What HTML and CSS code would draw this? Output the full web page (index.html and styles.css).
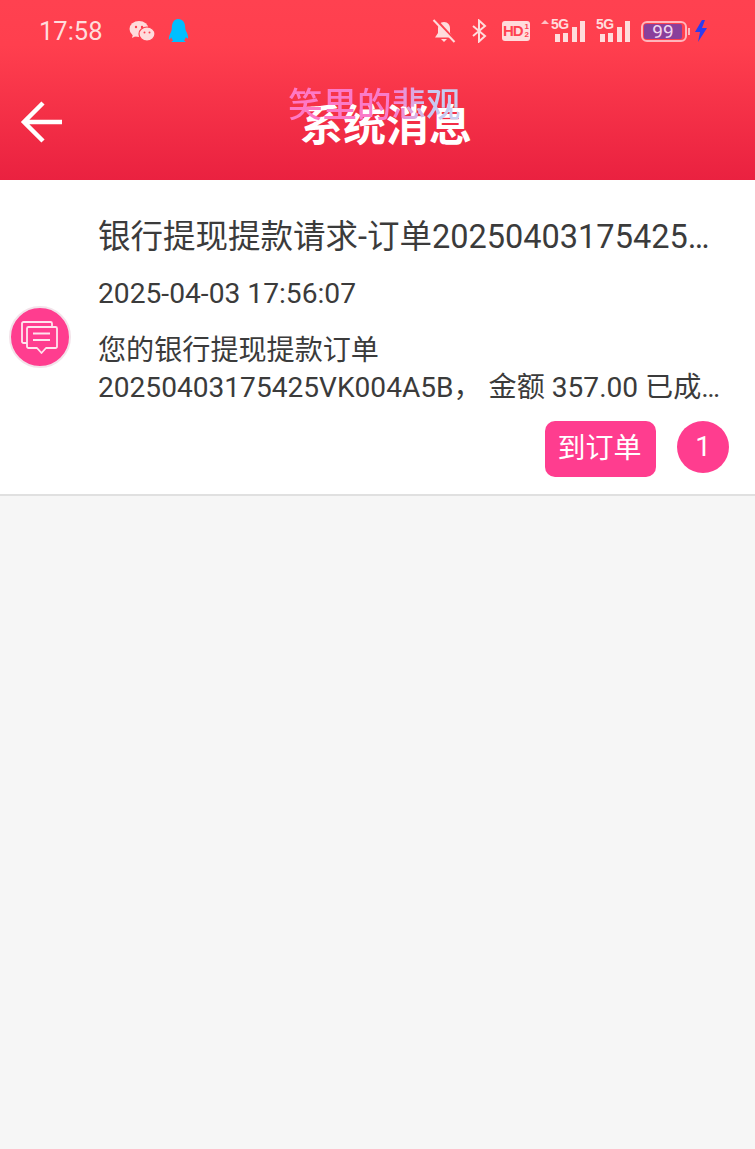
FILE: index.html
```html
<!DOCTYPE html>
<html lang="zh">
<head>
<meta charset="utf-8">
<title>系统消息</title>
<link rel="stylesheet" href="styles.css">
</head>
<body>
<header class="header">
  <div class="status">
    <span class="time">17:58</span>
    <div class="status-left">
      <svg class="ico-wechat" viewBox="0 0 26 22" width="26" height="22">
        <ellipse cx="10" cy="9" rx="9.500" ry="8" fill="#ffdcdc"/>
        <path d="M4 14l-1 4 5-2.500z" fill="#ffdcdc"/>
        <ellipse cx="18" cy="14" rx="8" ry="7" fill="#ffdcdc" stroke="#ff4150" stroke-width="1.200"/>
        <circle cx="7" cy="7" r="1.200" fill="#ff4150"/><circle cx="13" cy="7" r="1.200" fill="#ff4150"/>
        <circle cx="15.500" cy="12.500" r="1" fill="#ff4150"/><circle cx="20.500" cy="12.500" r="1" fill="#ff4150"/>
      </svg>
      <svg class="ico-qq" viewBox="0 0 24 26" width="24" height="26">
        <path d="M12 1c5 0 7.200 4 7.200 8.500 0 2 .6 3 1.600 5 1 2.300 1.700 5 1.200 5.800-.4.600-1.500-.3-2.200-1.300-.3 1.500-1 2.700-2 3.500 1 .4 1.700.9 1.700 1.500H5.500c0-.6.700-1.100 1.700-1.500-1-.8-1.700-2-2-3.500C4.500 21 3.400 21.900 3 21.300c-.5-.8.200-3.500 1.200-5.800 1-2 1.600-3 1.600-5C5.800 5 8 1 12 1z" fill="#00bfff"/>
      </svg>
    </div>
    <div class="status-right">
      <svg class="ico-bell" viewBox="0 0 24 26" width="24" height="26" fill="none">
        <path d="M12 4c-4 0-6 3-6 6.500V15l-3 4.500h18L18 15v-4.500C18 7 16 4 12 4z" fill="#ffdcdc"/>
        <path d="M9 21h6l-3 3z" fill="#ffdcdc"/>
        <path d="M3 1l21 23" stroke="#ff4150" stroke-width="3"/>
        <path d="M1.500 2l21 22" stroke="#ffdcdc" stroke-width="2"/>
      </svg>
      <svg class="ico-bt" viewBox="0 0 18 24" width="18" height="24" fill="none" stroke="#ffdcdc" stroke-width="2">
        <path d="M3 7l12 10-6 5.500V1.500L15 7 3 17"/>
      </svg>
      <span class="hd">HD<span class="hd-sub">1<br>2</span></span>
      <div class="signal signal-up">
        <span class="up-arrow"></span>
        <span class="net">5G</span>
        <i class="b1"></i><i class="b2"></i><i class="b3"></i><i class="b4"></i>
      </div>
      <div class="signal">
        <span class="net">5G</span>
        <i class="b1"></i><i class="b2"></i><i class="b3"></i><i class="b4"></i>
      </div>
      <div class="battery"><span class="battery-fill">99</span></div>
      <svg class="bolt" viewBox="0 0 14 24" width="14" height="24"><path d="M8 1L1 13h5l-2 10 9-14H8l3-8z" fill="#2b3cf0"/></svg>
    </div>
  </div>
  <div class="nav">
    <svg class="back" viewBox="0 0 44 44" width="44" height="44" fill="none" stroke="#fff" stroke-width="4.500">
      <path d="M24 3L5 22l19 19M5 22h38"/>
    </svg>
    <h1 class="title">系统消息</h1>
    <span class="watermark">笑里的悲观</span>
  </div>
</header>
<main class="card">
  <div class="avatar">
    <svg viewBox="0 0 40 40" width="40" height="40" fill="none" stroke="#ffe4ee" stroke-width="1.800" stroke-linejoin="round">
      <path d="M7 26H3.500a1.500 1.500 0 0 1-1.500-1.500V6.500A1.500 1.500 0 0 1 3.500 5h27A1.500 1.500 0 0 1 32 6.500V10"/>
      <path d="M8.500 10h27a1.500 1.500 0 0 1 1.500 1.500v18a1.500 1.500 0 0 1-1.500 1.500H26l-4.500 5-4.500-5H8.500A1.500 1.500 0 0 1 7 29.500v-18A1.500 1.500 0 0 1 8.500 10z"/>
      <path d="M13 16.500h17M13 23h17"/>
    </svg>
  </div>
  <div class="content">
    <h2 class="msg-title">银行提现提款请求-订单20250403175425VK004A5B</h2>
    <p class="msg-date">2025-04-03 17:56:07</p>
    <p class="msg-body">您的银行提现提款订单20250403175425VK004A5B， 金额 357.00 已成功处理完成</p>
    <div class="actions">
      <span class="btn">到订单</span>
      <span class="count">1</span>
    </div>
  </div>
</main>
</body>
</html>
```
FILE: styles.css
```css
* { box-sizing: border-box; }
html, body { margin: 0; padding: 0; }
body {
  width: 755px;
  height: 1149px;
  background: #f6f6f6;
  font-family: Roboto, "Noto Sans CJK SC", sans-serif;
  overflow: hidden;
}
.header {
  height: 180px;
  background: linear-gradient(180deg, #ff4150 0%, #ff3f4e 25%, #ea2140 100%);
  display: flex;
  flex-direction: column;
}
.status {
  height: 62px;
  display: flex;
  align-items: center;
  padding-left: 39px;
  color: #ffdcdc;
}
.time { font-size: 25.500px; width: 90px; }
.status-left { display: flex; align-items: center; gap: 11px; }
.status-right {
  margin-left: auto;
  margin-right: 47px;
  display: flex;
  align-items: center;
}
.ico-bt { margin-left: 14px; }
.hd {
  width: 28px;
  height: 20px;
  margin-left: 14px;
  background: #ffdcdc;
  color: #ff4150;
  border-radius: 3px;
  font: 700 15px/20px "Liberation Sans", sans-serif;
  letter-spacing: -1px;
  display: flex;
  align-items: center;
  justify-content: center;
  gap: 2px;
}
.hd-sub { font-size: 8px; line-height: 8px; letter-spacing: 0; }
.signal {
  position: relative;
  width: 34px;
  height: 24px;
  margin-left: 11px;
  margin-top: -2px;
  display: flex;
  align-items: flex-end;
  justify-content: flex-end;
  gap: 3.500px;
}
.signal-up { width: 44px; }
.signal i { display: block; width: 5px; background: #ffdcdc; }
.b1 { height: 8px; }
.b2 { height: 9px; }
.b3 { height: 15px; }
.b4 { height: 21px; }
.net {
  position: absolute;
  left: 0;
  top: -1px;
  font: 700 14px/15px "Liberation Sans", sans-serif;
  letter-spacing: -.5px;
  color: #ffdcdc;
}
.signal-up .net { left: 10px; }
.up-arrow {
  position: absolute;
  left: 0;
  top: 2px;
  border-left: 4px solid transparent;
  border-right: 4px solid transparent;
  border-bottom: 4px solid #ffc0c4;
}
.battery {
  position: relative;
  width: 46px;
  height: 21px;
  margin-left: 11px;
  border: 2px solid #ffb6bc;
  border-radius: 6px;
  padding: 1px;
}
.battery::after {
  content: "";
  position: absolute;
  right: -5px;
  top: 5px;
  width: 2px;
  height: 7px;
  background: #ffb6bc;
}
.battery-fill {
  display: block;
  width: 38px;
  height: 15px;
  background: #8a3f9b;
  color: #f3d7f0;
  font-size: 19px;
  line-height: 15px;
  text-align: center;
  border-radius: 2px;
}
.bolt { margin-left: 7px; }
.nav {
  position: relative;
  flex: 1;
}
.back { position: absolute; left: 19px; top: 38px; overflow: visible; }
.title {
  margin: 0;
  padding-top: 35px;
  padding-left: 17px;
  text-align: center;
  color: #fff;
  font-size: 43px;
  line-height: 58px;
  font-weight: 700;
}
.watermark {
  position: absolute;
  left: 288px;
  top: 20px;
  font-size: 34.500px;
  font-weight: 500;
  line-height: 46px;
  white-space: nowrap;
  background: linear-gradient(90deg, #ff78c4 0%, #f87ccb 60%, #c8c8f0 82%, #c8d0f0 100%);
  -webkit-background-clip: text;
  background-clip: text;
  color: transparent;
}
.card {
  height: 316px;
  background: #fff;
  border-bottom: 2px solid #e0e0e0;
  display: flex;
  align-items: flex-start;
}
.avatar {
  width: 62px;
  height: 62px;
  margin: 126px 0 0 9px;
  flex: none;
  border-radius: 50%;
  background: #ff3d8f;
  border: 2px solid #f3e3ea;
  display: flex;
  align-items: center;
  justify-content: center;
}
.content {
  flex: 1;
  min-width: 0;
  padding: 32px 26px 0 27px;
}
.msg-title, .msg-date, .msg-body { margin: 0; color: #3b3b3b; font-weight: 400; }
.msg-title {
  font-size: 32.500px;
  line-height: 50px;
  padding-right: 14px;
  white-space: nowrap;
  overflow: hidden;
  text-overflow: ellipsis;
}
.msg-date {
  font-size: 28.200px;
  line-height: 38px;
  margin-top: 13px;
}
.msg-body {
  font-size: 28.100px;
  line-height: 37px;
  margin-top: 19px;
  display: -webkit-box;
  -webkit-box-orient: vertical;
  -webkit-line-clamp: 2;
  overflow: hidden;
}
.actions {
  display: flex;
  justify-content: flex-end;
  align-items: flex-start;
  gap: 21px;
  margin-top: 15px;
}
.btn {
  width: 111px;
  height: 56px;
  padding-right: 2px;
  border-radius: 10px;
  background: #ff3d8f;
  color: #fff;
  font-size: 28px;
  line-height: 56px;
  text-align: center;
}
.count {
  width: 52px;
  height: 52px;
  border-radius: 50%;
  background: #ff3d8f;
  color: #fff;
  font-size: 28px;
  line-height: 52px;
  text-align: center;
}
```
